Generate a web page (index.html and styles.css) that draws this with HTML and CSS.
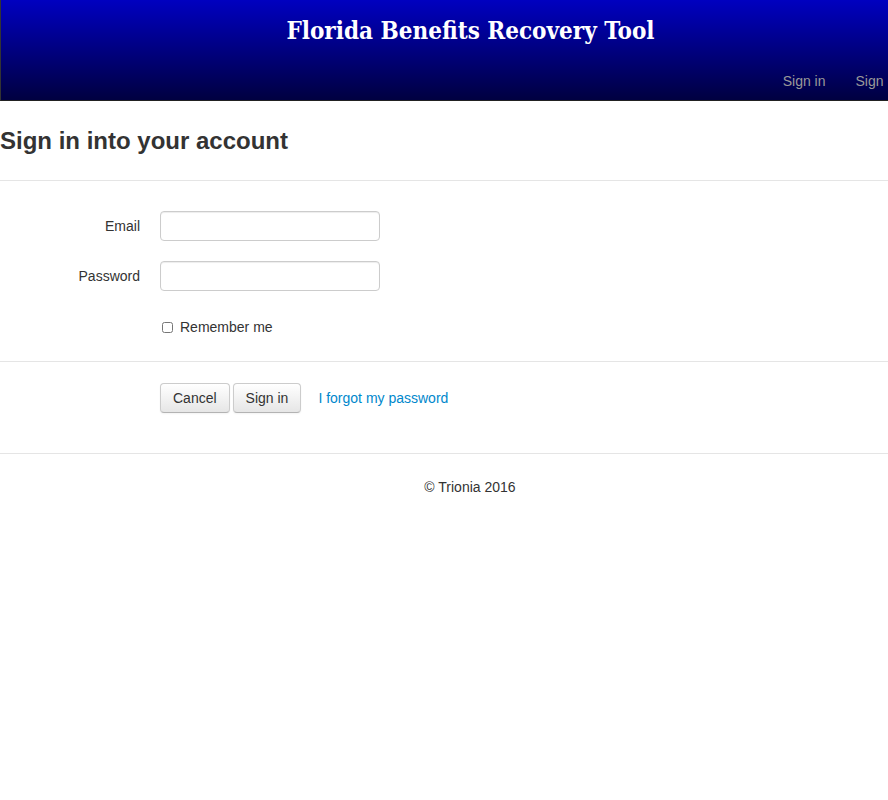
FILE: index.html
```html
<!DOCTYPE html>
<html>
<head>
<meta charset="utf-8">
<link rel="stylesheet" href="styles.css">
</head>
<body>
<header class="navbar">
  <h1 class="brand">Florida Benefits Recovery Tool</h1>
  <nav class="nav">
    <a href="#">Sign in</a>
    <a href="#">Sign up</a>
  </nav>
</header>
<main class="page">
  <h2 class="page-title">Sign in into your account</h2>
  <form class="form">
    <div class="fields">
      <div class="row">
        <label class="label">Email</label>
        <input class="input" type="text">
      </div>
      <div class="row">
        <label class="label">Password</label>
        <input class="input" type="password">
      </div>
      <div class="row check-row">
        <span class="label"></span>
        <label class="check"><input type="checkbox" class="checkbox"> Remember me</label>
      </div>
    </div>
    <div class="actions">
      <span class="label"></span>
      <button type="button" class="btn">Cancel</button>
      <button type="button" class="btn">Sign in</button>
      <a href="#" class="forgot">I forgot my password</a>
    </div>
  </form>
  <footer class="footer">© Trionia 2016</footer>
</main>
</body>
</html>
```
FILE: styles.css
```css
* { box-sizing: border-box; }
html, body { margin: 0; padding: 0; background: #fff; }
body {
  font-family: "Liberation Sans", Arial, sans-serif;
  font-size: 14px;
  color: #333;
}
.navbar {
  height: 101px;
  background: linear-gradient(to bottom, #0000c0 0%, #000040 100%);
  border-left: 1px solid #333;
  border-bottom: 1px solid #222;
  overflow: hidden;
  display: flex;
  flex-direction: column;
}
.brand {
  margin: 0;
  padding-top: 14px;
  text-align: center;
  color: #fff;
  font-family: "DejaVu Serif", serif;
  font-stretch: condensed;
  font-weight: bold;
  font-size: 24px;
  line-height: 34px;
  padding-left: 52px;
}
.nav {
  display: flex;
  justify-content: flex-end;
  margin-top: 23px;
  margin-right: -30px;
}
.nav a {
  color: #999;
  text-decoration: none;
  font-size: 14px;
  line-height: 20px;
  padding: 0 15px;
}
.page-title {
  margin: 0;
  padding: 25px 0 24px;
  font-size: 24px;
  line-height: 30px;
  font-weight: bold;
  color: #333;
  border-bottom: 1px solid #e5e5e5;
}
.fields {
  padding: 30px 0 24px;
  border-bottom: 1px solid #e5e5e5;
}
.row {
  display: flex;
  align-items: center;
  margin-bottom: 20px;
}
.row:last-child { margin-bottom: 0; }
.label {
  width: 140px;
  margin-right: 20px;
  text-align: right;
  line-height: 20px;
  flex: none;
}
.input {
  width: 220px;
  height: 30px;
  border: 1px solid #ccc;
  border-radius: 4px;
  box-shadow: inset 0 1px 1px rgba(0,0,0,0.075);
  font-family: inherit;
  font-size: 14px;
  padding: 4px 6px;
  margin: 0;
}
.check-row { padding-top: 6px; }
.check {
  display: flex;
  align-items: center;
  line-height: 20px;
}
.checkbox {
  width: 11px;
  height: 11px;
  margin: 0 7px 0 2px;
}
.actions {
  display: flex;
  align-items: center;
  padding: 21px 0 40px;
  border-bottom: 1px solid #e5e5e5;
}
.btn {
  height: 30px;
  padding: 0 12px;
  margin-right: 3px;
  font-family: inherit;
  font-size: 14px;
  color: #333;
  background: linear-gradient(to bottom, #ffffff, #e6e6e6);
  border: 1px solid #ccc;
  border-bottom-color: #b3b3b3;
  border-radius: 4px;
  box-shadow: inset 0 1px 0 rgba(255,255,255,0.2), 0 1px 2px rgba(0,0,0,0.05);
}
.forgot {
  margin-left: 14px;
  color: #0088cc;
  text-decoration: none;
}
.footer {
  text-align: center;
  padding: 23px 0 0 52px;
  line-height: 20px;
}
```
